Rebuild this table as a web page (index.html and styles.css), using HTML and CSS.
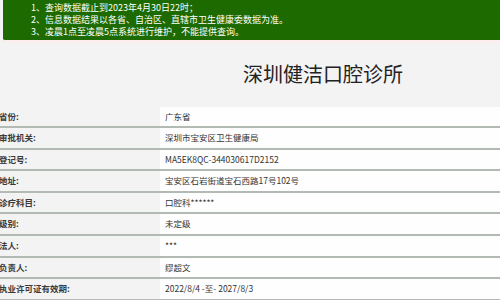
FILE: index.html
```html
<!DOCTYPE html>
<html lang="zh-CN">
<head>
<meta charset="utf-8">
<title>深圳健洁口腔诊所</title>
<link rel="stylesheet" href="styles.css">
</head>
<body>
<div class="notice">
  <p>1、查询数据截止到2023年4月30日22时；</p>
  <p>2、信息数据结果以各省、自治区、直辖市卫生健康委数据为准。</p>
  <p>3、凌晨1点至凌晨5点系统进行维护，不能提供查询。</p>
</div>
<div class="head">
  <h1 class="title">深圳健洁口腔诊所</h1>
</div>
<div class="table">
  <div class="row"><div class="label">省份:</div><div class="value">广东省</div></div>
  <div class="row"><div class="label">审批机关:</div><div class="value">深圳市宝安区卫生健康局</div></div>
  <div class="row"><div class="label">登记号:</div><div class="value">MA5EK8QC-344030617D2152</div></div>
  <div class="row"><div class="label">地址:</div><div class="value">宝安区石岩街道宝石西路17号102号</div></div>
  <div class="row"><div class="label">诊疗科目:</div><div class="value">口腔科******</div></div>
  <div class="row"><div class="label">级别:</div><div class="value">未定级</div></div>
  <div class="row"><div class="label">法人:</div><div class="value">***</div></div>
  <div class="row"><div class="label">负责人:</div><div class="value">缪超文</div></div>
  <div class="row"><div class="label">执业许可证有效期:</div><div class="value">2022/8/4 -至- 2027/8/3</div></div>
</div>
</body>
</html>
```
FILE: styles.css
```css
html, body {
  margin: 0;
  padding: 0;
}
body {
  background: #f3f3f3;
  font-family: "Noto Sans CJK SC", "Noto Sans", sans-serif;
  color: #333;
  width: 500px;
  height: 300px;
  overflow: hidden;
}
.notice {
  margin-left: 3px;
  height: 43px;
  box-sizing: border-box;
  padding: 2px 0 0 28px;
  background: #1d6b00;
  border-bottom-left-radius: 4px;
  border-bottom: 3px solid #fbeeee;
  color: #fff;
  font-size: 9px;
  line-height: 12px;
  white-space: nowrap;
  overflow: hidden;
}
.notice p {
  margin: 0;
}
.head {
  height: 63.5px;
  box-sizing: border-box;
  padding: 19px 0 0 243px;
}
.title {
  margin: 0;
  font-size: 20px;
  line-height: 24px;
  font-weight: normal;
  color: #222;
  white-space: nowrap;
}
.table {
  display: flex;
  flex-direction: column;
}
.row {
  display: grid;
  grid-template-columns: 160px 1fr;
  height: 21.6px;
  box-sizing: border-box;
  border-bottom: 2px solid #b3bab3;
  font-size: 8.5px;
  line-height: 19.6px;
}
.label {
  background: #f3f3f3;
  font-weight: bold;
  color: #3a3a3a;
  margin-left: -1px;
  white-space: nowrap;
}
.value {
  background: #fefefe;
  padding-left: 5px;
  color: #333;
  white-space: nowrap;
}
```
